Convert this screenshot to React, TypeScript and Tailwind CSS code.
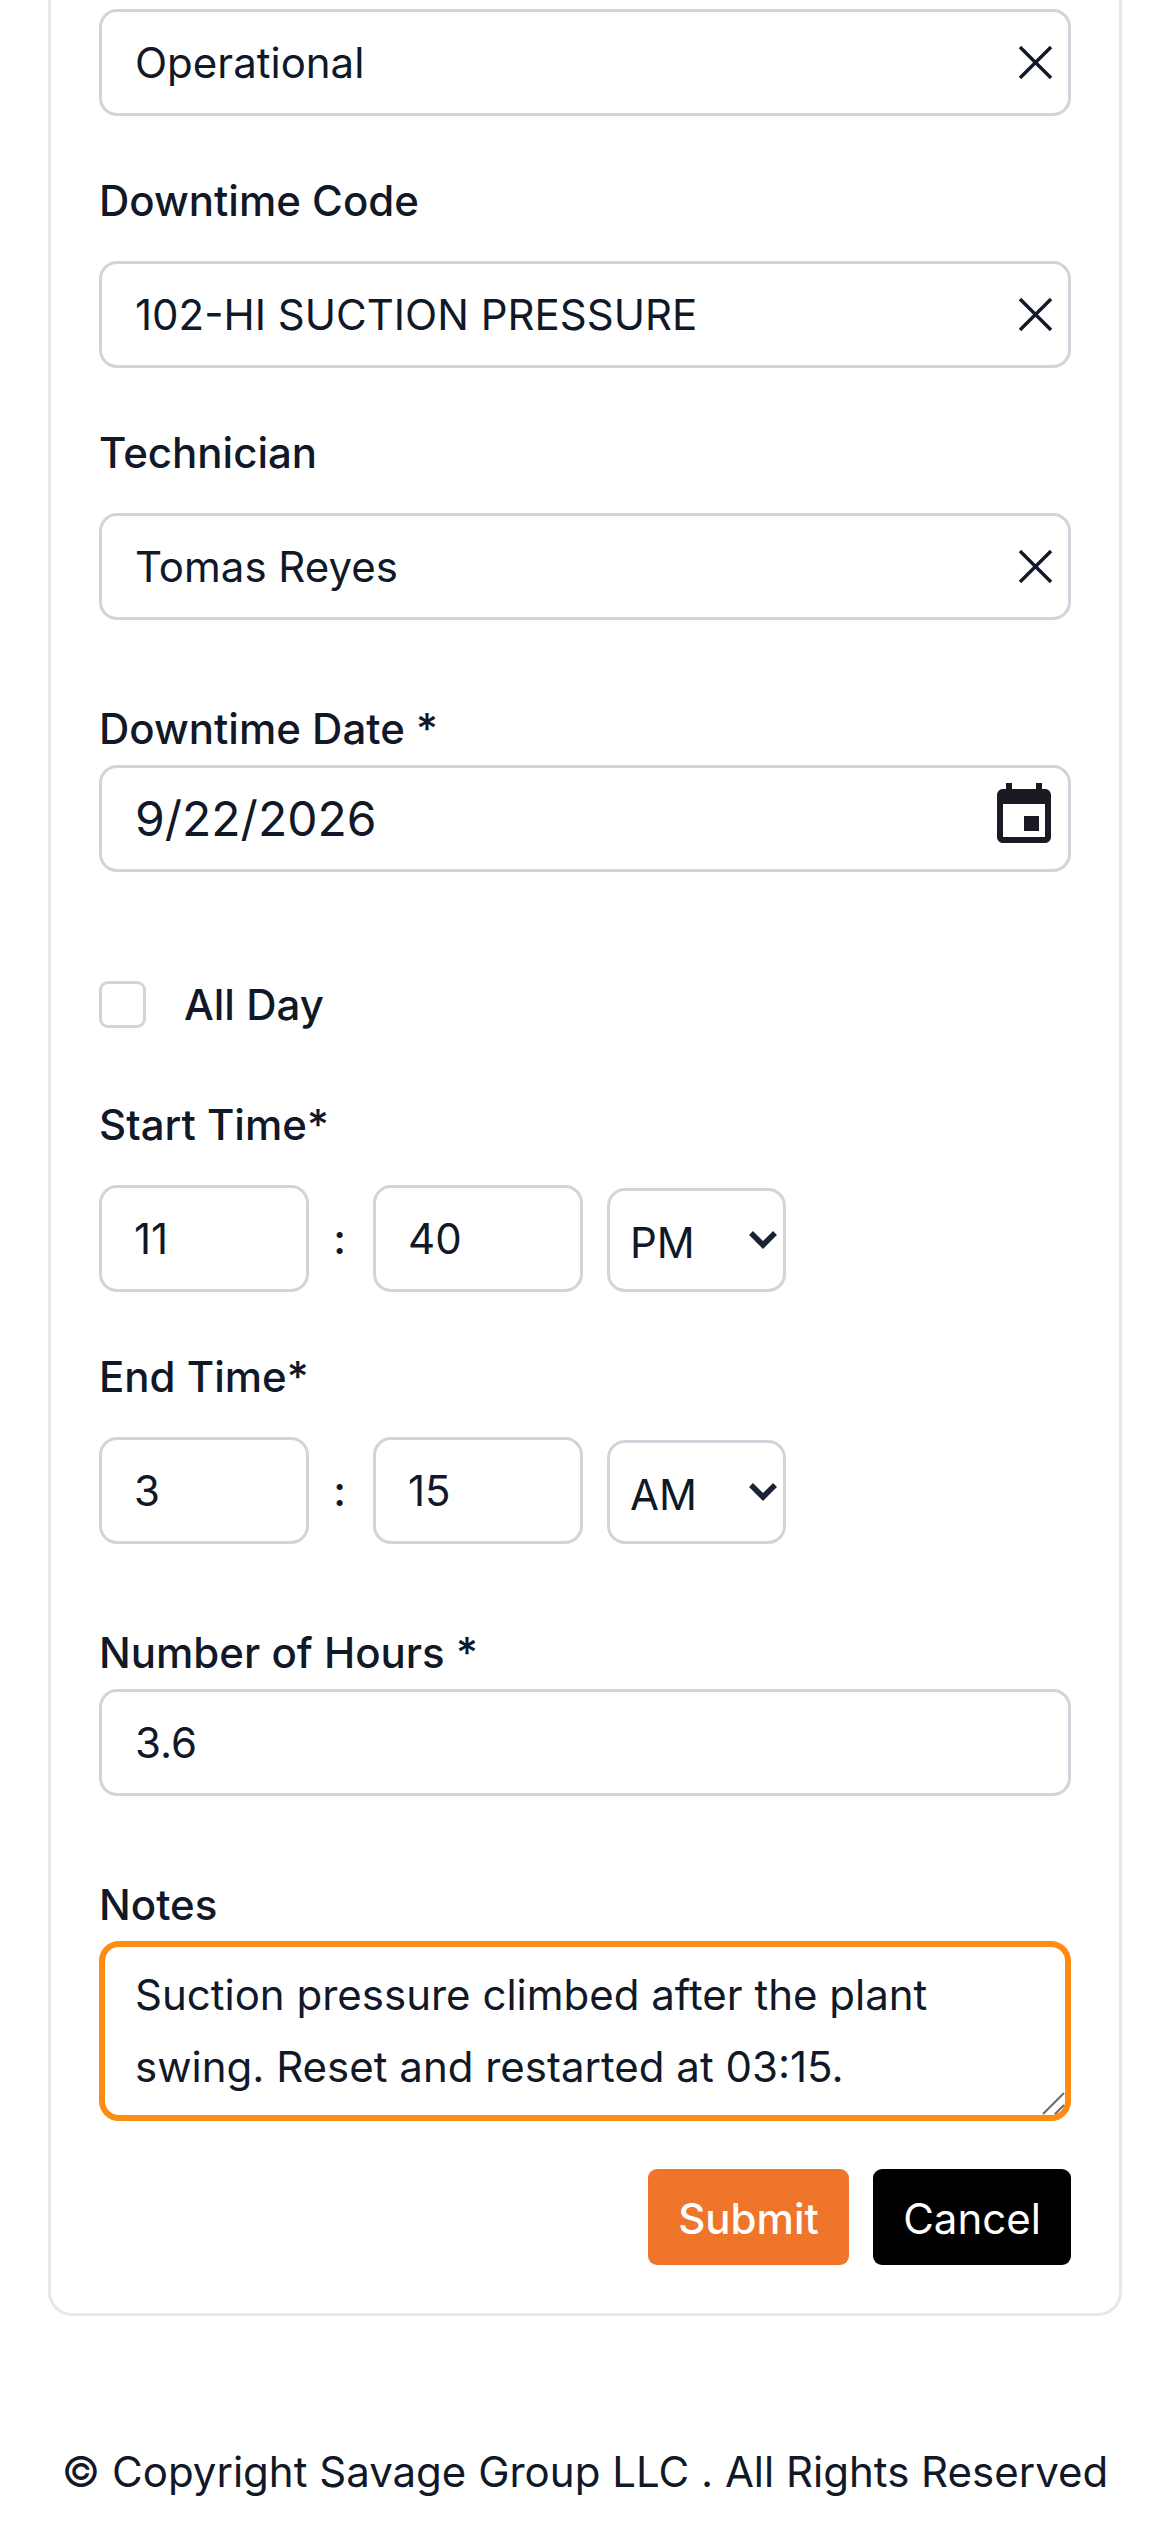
const font = { fontFamily: 'Inter, "Noto Sans", sans-serif' };

function Label({ children, className = '' }: { children: React.ReactNode; className?: string }) {
  return <div className={`h-[60px] text-[42px] leading-[60px] font-medium text-[#111827] ${className}`}>{children}</div>;
}

function ClearIcon() {
  return (
    <svg viewBox="0 0 33 33" className="w-[33px] h-[33px] shrink-0" fill="none" stroke="#111827" strokeWidth="3.4">
      <path d="M1 1L32 32M32 1L1 32" />
    </svg>
  );
}

function Field({ value }: { value: string }) {
  return (
    <div className="h-[107px] border-[3px] border-[#d1d5db] rounded-[18px] bg-white flex items-center justify-between pl-[33px] pr-[16px] text-[42px] text-[#111827]">
      <span>{value}</span>
      <ClearIcon />
    </div>
  );
}

function TimeRow({ hour, minute, ampm, className = '' }: { hour: string; minute: string; ampm: string; className?: string }) {
  const box = 'w-[210px] h-[107px] border-[3px] border-[#d1d5db] rounded-[18px] flex items-center pl-[32px] text-[42px] text-[#111827]';
  return (
    <div className={`flex items-center ${className}`}>
      <div className={box}>{hour}</div>
      <div className="w-[64px] pr-[3px] text-center text-[42px] text-[#111827] font-medium">:</div>
      <div className={box}>{minute}</div>
      <div className="ml-[24px] self-end w-[179px] h-[104px] border-[3px] border-[#d1d5db] rounded-[18px] flex items-center justify-between pl-[20px] pr-[6px] text-[42px] text-[#111827]">
        <span className="mt-[4px]">{ampm}</span>
        <svg viewBox="0 0 28 20" className="w-[28px] h-[20px]" fill="none" stroke="#1a2235" strokeWidth="5.5">
          <path d="M2 3L14 15L26 3" />
        </svg>
      </div>
    </div>
  );
}

export default function App() {
  return (
    <div style={font} className="h-[2532px] overflow-hidden bg-white">
      <div className="mx-[48px] h-[2316px] border-[3px] border-t-0 border-[#e5e7eb] rounded-b-[24px] px-[48px] pt-[9px]">
        <Field value="Operational" />
        <Label className="mt-[55px] mb-[30px]">Downtime Code</Label>
        <Field value="102-HI SUCTION PRESSURE" />
        <Label className="mt-[55px] mb-[30px]">Technician</Label>
        <Field value="Tomas Reyes" />

        <Label className="mt-[79px] mb-[6px]">Downtime Date *</Label>
        <div className="h-[107px] border-[3px] border-[#d1d5db] rounded-[18px] flex items-center justify-between pl-[33px] pr-[8px] text-[48px] text-[#111827]">
          <span>9/22/2026</span>
          <svg viewBox="0 0 24 24" className="w-[72px] h-[72px] mb-[6px]" fill="#1a1b22">
            <path d="M17 12h-5v5h5v-5zM16 1v2H8V1H6v2H5c-1.11 0-1.99.9-1.99 2L3 19c0 1.1.89 2 2 2h14c1.1 0 2-.9 2-2V5c0-1.1-.9-2-2-2h-1V1h-2zm3 18H5V8h14v11z" />
          </svg>
        </div>

        <div className="flex items-center mt-[101px]">
          <div className="w-[47px] h-[47px] border-[3px] border-[#d1d5db] rounded-[9px]" />
          <span className="ml-[38px] text-[42px] font-medium text-[#111827]">All Day</span>
        </div>

        <Label className="mt-[59px]">Start Time*</Label>
        <TimeRow hour="11" minute="40" ampm="PM" className="mt-[30px]" />
        <Label className="mt-[55px]">End Time*</Label>
        <TimeRow hour="3" minute="15" ampm="AM" className="mt-[30px]" />

        <Label className="mt-[79px] mb-[6px]">Number of Hours *</Label>
        <div className="h-[107px] border-[3px] border-[#d1d5db] rounded-[18px] flex items-center pl-[33px] text-[42px] text-[#111827]">3.6</div>

        <Label className="mt-[79px] mb-[6px]">Notes</Label>
        <div className="relative h-[180px] border-[6px] border-[#ff8c12] rounded-[20px] pl-[30px] pt-[12px] text-[42px] leading-[72px] text-[#111827]">
          Suction pressure climbed after the plant
          <br />
          swing. Reset and restarted at 03:15.
          <svg viewBox="0 0 24 24" className="absolute right-0 bottom-0 w-[24px] h-[24px]" fill="none" stroke="#6b6b6b" strokeWidth="2">
            <path d="M2 23L23 2M14 23L23 14" />
          </svg>
        </div>

        <div className="flex justify-end gap-[24px] mt-[48px]">
          <div className="w-[201px] h-[96px] pt-[3px] rounded-[9px] bg-[#ee752a] text-white text-[42px] font-medium flex items-center justify-center">Submit</div>
          <div className="w-[198px] h-[96px] pt-[3px] rounded-[9px] bg-black text-white text-[42px] flex items-center justify-center">Cancel</div>
        </div>
      </div>
      <div className="mt-[124px] text-center text-[42px] leading-[63px] text-[#111827]">© Copyright Savage Group LLC . All Rights Reserved</div>
    </div>
  );
}
